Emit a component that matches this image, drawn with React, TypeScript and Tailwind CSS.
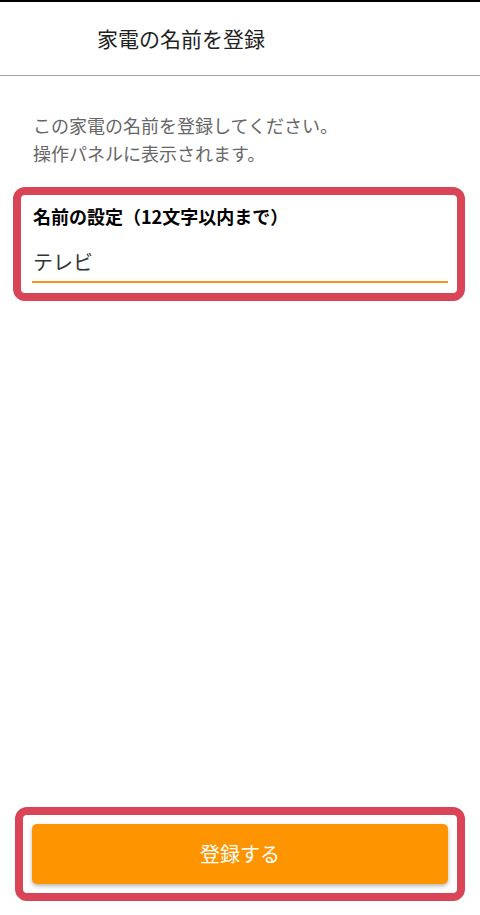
export default function App() {
  return (
    <div className="flex h-[915px] flex-col bg-white font-['Noto_Sans_CJK_JP','Noto_Sans',sans-serif]">
      <header className="flex h-[76px] items-center border-t-2 border-b border-t-black border-b-[#a3a3a3] pl-[97px] text-[21px] text-[#222]">
        家電の名前を登録
      </header>

      <p className="pt-[35px] pl-[33px] text-[18px] leading-[28px] text-[#666]">
        この家電の名前を登録してください。
        <br />
        操作パネルに表示されます。
      </p>

      <div className="mt-[20px] ml-[13px] w-[452px] rounded-[12px] border-[8px] border-[#d94456] pt-[8px] pr-[9px] pb-[10px] pl-[11px]">
        <label className="block pl-[1px] text-[18px] leading-[26px] font-bold text-black">
          名前の設定（12文字以内まで）
        </label>
        <div className="border-b-2 border-[#fb9112] pt-[18px] pb-[4px]">
          <input
            readOnly
            value="テレビ"
            className="block w-full bg-transparent pl-[1px] text-[20px] leading-[30px] text-[#333] outline-none"
          />
        </div>
      </div>

      <div className="mt-auto mb-[14px] ml-[15px] w-[450px] rounded-[12px] border-[8px] border-[#d94456] p-[9px]">
        <button className="flex h-[60px] w-full items-center justify-center rounded-[5px] bg-[#fe9400] text-[20px] text-white shadow-[0_2px_4px_rgba(0,0,0,0.3)]">
          登録する
        </button>
      </div>
    </div>
  );
}
